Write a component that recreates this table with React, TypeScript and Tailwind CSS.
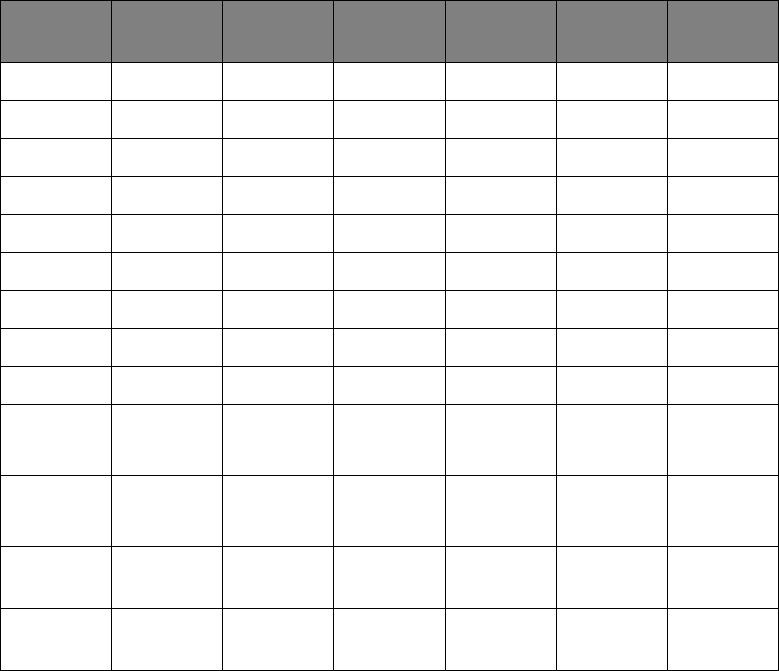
import React from "react";

const rowHeights = [38, 38, 38, 38, 38, 38, 38, 38, 38, 71, 71, 62, 62];
const hClasses: Record<number, string> = {
  38: "h-[38px]",
  71: "h-[71px]",
  62: "h-[62px]",
};

export default function App() {
  const cols = Array.from({ length: 7 });
  return (
    <div className="w-[779px] bg-white" style={{ fontFamily: "'Liberation Sans', Arial, sans-serif" }}>
      <div className="border-l border-t border-black">
        <div className="grid grid-cols-7">
          {cols.map((_, i) => (
            <div key={i} className="h-[62px] border-b border-r border-black bg-[#808080]" />
          ))}
        </div>
        {rowHeights.map((h, r) => (
          <div key={r} className="grid grid-cols-7">
            {cols.map((_, i) => (
              <div key={i} className={`${hClasses[h]} border-b border-r border-black bg-white`} />
            ))}
          </div>
        ))}
      </div>
    </div>
  );
}
